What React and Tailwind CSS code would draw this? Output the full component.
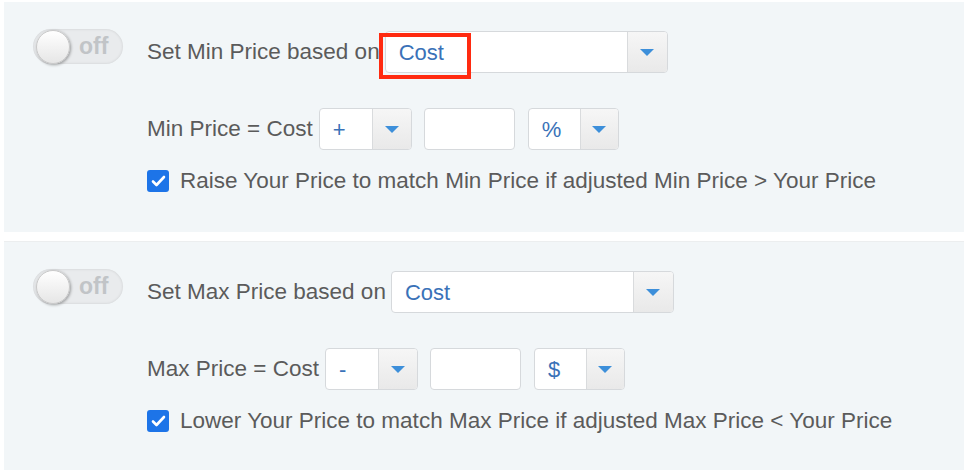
import { useState } from "react";

function Toggle() {
  return (
    <div className="relative mt-[-2px] flex h-[35px] w-[90px] shrink-0 items-center rounded-full bg-[#e9ebed] shadow-[inset_0_0_3px_rgba(0,0,0,0.12)]">
      <div className="ml-[3px] h-[34px] w-[34px] rounded-full border border-[#c9c9c9] bg-gradient-to-b from-white to-[#e6e6e6] shadow-[1px_1px_3px_rgba(0,0,0,0.35)]" />
      <span className="ml-[9px] text-[23px] font-bold text-[#c1c4c7]">off</span>
    </div>
  );
}

function Arrow() {
  return (
    <svg width="16" height="9" viewBox="0 0 16 9">
      <path d="M1 1h14L8 8z" fill="#3d8fda" />
    </svg>
  );
}

function Select({ value, width, arrowWidth = 40 }) {
  return (
    <div
      className="flex h-[42px] shrink-0 overflow-hidden rounded-[4px] border border-[#d6d9dc] bg-white"
      style={{ width }}
    >
      <div className="flex flex-1 items-center pl-[13px] text-[22px] text-[#3a72b8]">
        {value}
      </div>
      <div
        className="flex items-center justify-center border-l border-[#d9dbdd] bg-gradient-to-b from-[#f6f6f6] to-[#e9e9e9]"
        style={{ width: arrowWidth }}
      >
        <Arrow />
      </div>
    </div>
  );
}

function Check({ checked }) {
  return (
    <div
      className={
        "flex h-[22px] w-[22px] shrink-0 items-center justify-center rounded-[3px] " +
        (checked ? "bg-[#1d74e8]" : "border border-gray-400 bg-white")
      }
    >
      {checked && (
        <svg width="15" height="12" viewBox="0 0 15 12">
          <path
            d="M2 6.5l3.5 3.5L13 2"
            fill="none"
            stroke="white"
            strokeWidth="2.6"
            strokeLinecap="round"
            strokeLinejoin="round"
          />
        </svg>
      )}
    </div>
  );
}

function Card({ kind, sign, unit, checkText, highlight, top }) {
  const [checked, setChecked] = useState(true);
  return (
    <div className={"flex bg-[#f2f6f8] pl-[29px] " + top}>
      <div className="pt-[29px]">
        <Toggle />
      </div>
      <div className="ml-[24px] flex flex-col pt-[29px]">
        <div className="flex items-center">
          <span>Set {kind} Price based on</span>
          <div className="relative ml-[5px]">
            <Select value="Cost" width={283} />
            {highlight && (
              <div className="absolute left-[-6px] top-[2px] h-[46px] w-[92px] border-[4px] border-[#ff2a10]" />
            )}
          </div>
        </div>
        <div className="mt-[35px] flex items-center">
          <span>{kind} Price = Cost</span>
          <div className="ml-[6px]">
            <Select value={sign} width={93} arrowWidth={39} />
          </div>
          <div className="ml-[12px] h-[42px] w-[91px] rounded-[4px] border border-[#d6d9dc] bg-white" />
          <div className="ml-[13px]">
            <Select value={unit} width={91} arrowWidth={38} />
          </div>
        </div>
        <div
          className="mt-[14px] flex cursor-pointer items-center"
          onClick={() => setChecked(!checked)}
        >
          <Check checked={checked} />
          <span className="ml-[11px]">{checkText}</span>
        </div>
      </div>
    </div>
  );
}

export default function App() {
  return (
    <div className="h-[470px] w-[964px] overflow-hidden bg-white pl-[4px] pt-[2px] font-['Liberation_Sans',Arial,sans-serif] text-[22.5px] text-[#5b5b5b]">
      <Card
        kind="Min"
        sign="+"
        unit="%"
        checkText="Raise Your Price to match Min Price if adjusted Min Price > Your Price"
        highlight
        top="h-[230px]"
      />
      <div className="h-[9px] bg-white" />
      <div className="h-[1px] bg-[#eceeef]" />
      <Card
        kind="Max"
        sign="-"
        unit="$"
        checkText="Lower Your Price to match Max Price if adjusted Max Price < Your Price"
        top="h-[240px]"
      />
    </div>
  );
}
